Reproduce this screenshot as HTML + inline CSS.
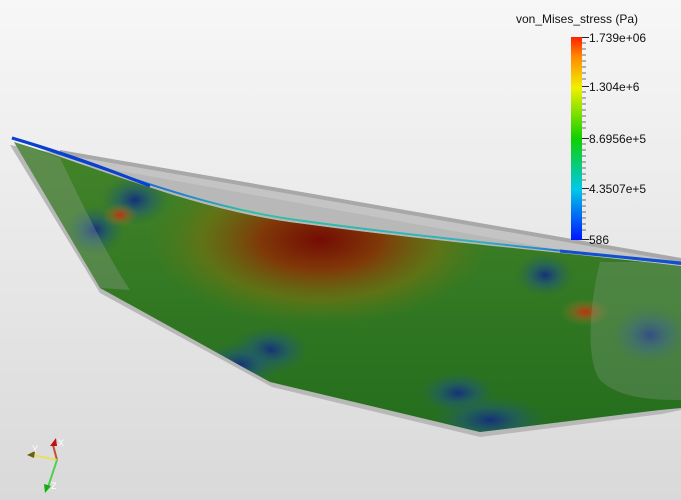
<!DOCTYPE html>
<html><head><style>
html,body{margin:0;padding:0;width:681px;height:500px;overflow:hidden;background:#e8e8e8}
svg{display:block}
text{font-family:"Liberation Sans",sans-serif;fill:#111}
</style></head><body>
<svg width="681" height="500" viewBox="0 0 681 500">
<defs>
<linearGradient id="bg" x1="0" y1="0" x2="0" y2="1">
<stop offset="0" stop-color="#f7f7f7"/><stop offset="1" stop-color="#d9d9d9"/>
</linearGradient>
<linearGradient id="cb" x1="0" y1="1" x2="0" y2="0">
<stop offset="0" stop-color="#0015ff"/><stop offset="0.25" stop-color="#00c8e8"/>
<stop offset="0.5" stop-color="#10d000"/><stop offset="0.75" stop-color="#f0f000"/>
<stop offset="0.9" stop-color="#ff8c00"/><stop offset="1" stop-color="#ff2000"/>
</linearGradient>
<linearGradient id="base" x1="0" y1="0" x2="0" y2="1">
<stop offset="0" stop-color="#45852a"/><stop offset="1" stop-color="#226c1c"/>
</linearGradient>
<radialGradient id="red" cx="0.5" cy="0.5" r="0.5">
<stop offset="0" stop-color="#740c04"/><stop offset="0.35" stop-color="#803808"/>
<stop offset="0.7" stop-color="#6f7010" stop-opacity="0.7"/><stop offset="1" stop-color="#5a7a15" stop-opacity="0"/>
</radialGradient>
<radialGradient id="blu" cx="0.5" cy="0.5" r="0.5">
<stop offset="0" stop-color="#14307a"/><stop offset="0.5" stop-color="#205a70" stop-opacity="0.6"/><stop offset="1" stop-color="#2a6a40" stop-opacity="0"/>
</radialGradient>
<radialGradient id="rsp" cx="0.5" cy="0.5" r="0.5">
<stop offset="0" stop-color="#c03010"/><stop offset="0.5" stop-color="#a06020" stop-opacity="0.5"/><stop offset="1" stop-color="#808020" stop-opacity="0"/>
</radialGradient>
<linearGradient id="rim" x1="0" y1="0" x2="1" y2="0">
<stop offset="0" stop-color="#0a40d0"/><stop offset="0.25" stop-color="#2080d0"/>
<stop offset="0.35" stop-color="#30c0a0"/><stop offset="0.7" stop-color="#30b0c0"/>
<stop offset="0.85" stop-color="#2070d0"/><stop offset="1" stop-color="#1050d0"/>
</linearGradient>
<clipPath id="surf">
<path d="M14,142 C100,168 200,212 304,224 C420,240 560,252 681,266 L681,408 L660,410 L480,432 L270,382 L100,288 Z"/>
</clipPath>
</defs>
<rect width="681" height="500" fill="url(#bg)"/>
<!-- gray sheet -->
<path d="M10,145 L681,262 L681,410 L662,414 L480,437 L272,387 L100,293 Z" fill="#b8b8b8"/>
<path d="M60,150 L681,258 L681,272 L60,160 Z" fill="#c4c4c4"/>
<path d="M60,150 L681,258 L681,262 L60,154 Z" fill="#a8a8a8"/>
<!-- colored surface -->
<g clip-path="url(#surf)">
<rect x="0" y="130" width="681" height="320" fill="url(#base)"/>
<ellipse cx="320" cy="240" rx="170" ry="85" fill="url(#red)"/>
<ellipse cx="135" cy="200" rx="35" ry="25" fill="url(#blu)"/>
<ellipse cx="95" cy="230" rx="30" ry="25" fill="url(#blu)"/>
<ellipse cx="120" cy="215" rx="18" ry="12" fill="url(#rsp)"/>
<ellipse cx="545" cy="275" rx="30" ry="22" fill="url(#blu)"/>
<ellipse cx="585" cy="312" rx="25" ry="14" fill="url(#rsp)"/>
<ellipse cx="270" cy="350" rx="40" ry="25" fill="url(#blu)"/>
<ellipse cx="240" cy="365" rx="40" ry="25" fill="url(#blu)"/>
<ellipse cx="458" cy="393" rx="40" ry="22" fill="url(#blu)"/>
<ellipse cx="490" cy="420" rx="60" ry="25" fill="url(#blu)"/>
<ellipse cx="650" cy="335" rx="40" ry="30" fill="url(#blu)"/>
<path d="M14,142 L60,158 C90,220 110,260 130,290 L100,288 Z" fill="#9aa6a0" opacity="0.3"/>
<path d="M600,262 C590,300 585,360 600,380 C620,400 660,400 681,400 L681,262Z" fill="#9aa6a0" opacity="0.25"/>
</g>
<!-- rim -->
<path d="M12,138 C100,166 200,208 304,221 C420,237 560,250 681,264" fill="none" stroke="url(#rim)" stroke-width="2"/>
<path d="M12,138 C60,152 100,166 150,186" fill="none" stroke="#0a40d0" stroke-width="3"/>
<path d="M560,251 C600,255 640,259 681,263" fill="none" stroke="#1050d0" stroke-width="3"/>
<!-- colorbar -->
<text x="577" y="23" font-size="12" text-anchor="middle">von_Mises_stress (Pa)</text>
<rect x="571" y="37" width="11" height="203" fill="url(#cb)"/>
<g stroke="#222" stroke-width="1">
<line x1="582" y1="37.5" x2="589" y2="37.5"/><line x1="582" y1="86.5" x2="589" y2="86.5"/>
<line x1="582" y1="138.5" x2="589" y2="138.5"/><line x1="582" y1="188.5" x2="589" y2="188.5"/>
<line x1="582" y1="239.5" x2="589" y2="239.5"/>
</g>
<g stroke="#444" stroke-width="0.8">
<path d="M582,43h4M582,49h4M582,55h4M582,61h4M582,67h4M582,73h4M582,79h4M582,92h4M582,98h4M582,104h4M582,110h4M582,116h4M582,122h4M582,128h4M582,144h4M582,150h4M582,156h4M582,162h4M582,168h4M582,174h4M582,180h4M582,194h4M582,200h4M582,206h4M582,212h4M582,218h4M582,224h4M582,230h4"/>
</g>
<text x="589" y="42" font-size="12">1.739e+06</text>
<text x="589" y="91" font-size="12">1.304e+6</text>
<text x="589" y="143" font-size="12">8.6956e+5</text>
<text x="589" y="193" font-size="12">4.3507e+5</text>
<text x="589" y="244" font-size="12">586</text>
<!-- axes -->
<line x1="57" y1="460" x2="53" y2="445" stroke="#c05030" stroke-width="2"/>
<path d="M50,446 L56,438 L57,446 Z" fill="#c01010"/>
<line x1="57" y1="460" x2="33" y2="455" stroke="#e8e060" stroke-width="2"/>
<path d="M27,455 L35,451 L34,458 Z" fill="#6a6010"/>
<line x1="57" y1="460" x2="48" y2="487" stroke="#50d050" stroke-width="2"/>
<path d="M45,493 L44,484 L51,486 Z" fill="#10b010"/>
<text x="58" y="446" font-size="9" style="fill:#fff">X</text>
<text x="32" y="452" font-size="9" style="fill:#fff">Y</text>
<text x="51" y="489" font-size="9" style="fill:#fff">Z</text>
</svg>
</body></html>
